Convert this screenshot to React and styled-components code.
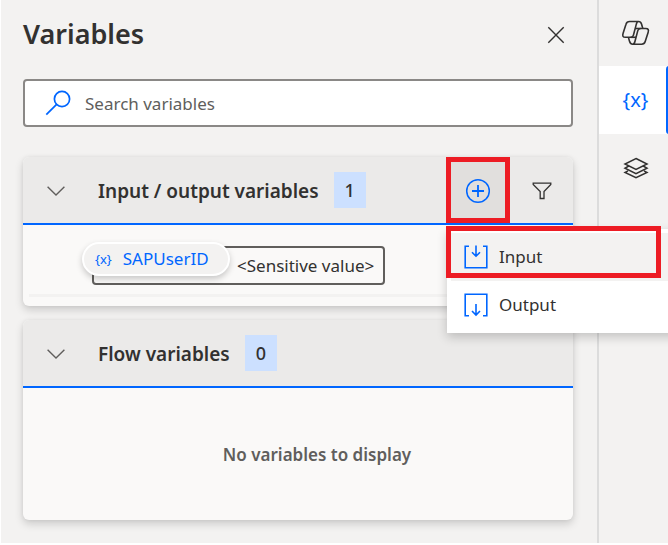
import React from "react";
import styled, { createGlobalStyle } from "styled-components";

const blue = "#0066ff";
const ink = "#323130";

const GlobalStyle = createGlobalStyle`
  *, *::before, *::after { box-sizing: border-box; }
  body { margin: 0; background: #fff; overflow: hidden; }
  body, button, input { font-family: "Noto Sans", "Open Sans", sans-serif; color: ${ink}; }
  h1, h2, p, ul { margin: 0; padding: 0; }
  button { border: 0; padding: 0; background: transparent; cursor: pointer; }
  svg { display: block; flex: none; }
`;

const Shell = styled.div`
  display: flex;
  height: 100vh;
  border-left: 1px solid #fff;
  border-bottom: 2px solid #fff;
  background: #f3f2f1;
  overflow: hidden;
`;

const Panel = styled.main`
  flex: 1;
  min-width: 0;
  padding: 12px 24px 24px 22px;
`;

const PanelHeader = styled.header`
  display: flex;
  align-items: center;
  justify-content: space-between;
  height: 44px;
`;

const Title = styled.h1`
  font-size: 27px;
  line-height: 44px;
  font-weight: 600;
`;

const CloseButton = styled.button`
  display: grid;
  place-items: center;
  width: 34px;
  height: 44px;
  padding-top: 2px;
`;

const SearchBox = styled.label`
  display: flex;
  align-items: center;
  gap: 14px;
  height: 48px;
  margin: 23px 0 30px;
  padding: 0 20px;
  border: 2px solid #8a8886;
  border-radius: 4px;
  background: #fff;
`;

const SearchInput = styled.input`
  flex: 1;
  min-width: 0;
  border: 0;
  outline: 0;
  padding: 2px 0 0;
  font-size: 17px;
  line-height: 24px;
  background: transparent;
  &::placeholder { color: #605e5c; opacity: 1; }
`;

const Card = styled.section`
  border-radius: 6px;
  background: #faf9f8;
  box-shadow: 0 4px 8px rgba(0, 0, 0, 0.16), 0 0 4px rgba(0, 0, 0, 0.06);
  & + & { margin-top: 14px; }
`;

const CardHeader = styled.div`
  display: flex;
  align-items: center;
  height: 68px;
  border-bottom: 2px solid ${blue};
  border-radius: 6px 6px 0 0;
  background: #ebeae9;
`;

const Toggle = styled.button`
  display: grid;
  place-items: center;
  width: 66px;
  height: 66px;
  margin-right: 9px;
  padding-top: 2px;
`;

const CardTitle = styled.h2`
  padding-top: 2px;
  font-size: 19px;
  line-height: 28px;
  font-weight: 600;
  white-space: nowrap;
`;

const Count = styled.span`
  min-width: 32px;
  margin-left: 15px;
  padding: 0 11px;
  background: #cce0ff;
  font-size: 18px;
  line-height: 36px;
  font-weight: 500;
  text-align: center;
`;

const Actions = styled.div`
  position: relative;
  display: flex;
  align-self: flex-start;
  margin-left: auto;
`;

const ActionButton = styled.button`
  position: relative;
  display: grid;
  place-items: center;
  width: 63px;
  height: 66px;
  padding-top: 2px;
  background: ${(p) => (p.$active ? "#e1dfdd" : "transparent")};
  &:first-child { width: 64px; }
`;

const Highlight = styled.span`
  position: absolute;
  inset: ${(p) => p.$inset || 0};
  border: 5px solid #ed1c24;
  pointer-events: none;
`;

const Menu = styled.ul`
  position: absolute;
  z-index: 2;
  top: 72px;
  left: 1px;
  width: 240px;
  padding: 4px;
  list-style: none;
  background: #fff;
  box-shadow: 0 4px 10px rgba(0, 0, 0, 0.2);
`;

const MenuButton = styled.button`
  display: flex;
  align-items: center;
  gap: 11px;
  width: 100%;
  height: 48px;
  padding-left: 13px;
  font-size: 17px;
  line-height: 24px;
  background: ${(p) => (p.$active ? "#f3f2f1" : "#fff")};
`;

const VariableRow = styled.div`
  margin: 0 6px;
  padding: 21px 0 9px 63px;
  border-bottom: 3px solid #f3f2f1;
`;

const VariableList = styled.div`
  padding-bottom: 9px;
`;

const ValueBox = styled.div`
  position: relative;
  width: fit-content;
  min-width: 293px;
  padding-left: 143px;
  border: 2px solid #605e5c;
  border-radius: 4px;
  font-size: 17px;
  line-height: 35px;
  white-space: nowrap;
`;

const Chip = styled.button`
  position: absolute;
  top: -6px;
  left: -12px;
  display: flex;
  align-items: center;
  gap: 11px;
  width: 148px;
  height: 34px;
  padding-left: 11px;
  border: 2px solid #fff;
  border-radius: 17px;
  background: #f3f2f1;
  box-shadow: 0 3px 6px rgba(0, 0, 0, 0.2);
  color: ${blue};
  font-size: 17px;
  line-height: 24px;
`;

const Braces = styled.span`
  font-size: ${(p) => p.$size}px;
  line-height: 24px;
  color: ${blue};
`;

const Empty = styled.p`
  padding: 55px 0 53px;
  margin-left: 38px;
  text-align: center;
  font-size: 17px;
  line-height: 24px;
  font-weight: 600;
  color: #605e5c;
`;

const Rail = styled.nav`
  flex: none;
  width: 71px;
  border-left: 2px solid #dcdcdc;
  overflow: hidden;
`;

const RailButton = styled.button`
  display: grid;
  place-items: center;
  width: 73px;
  height: ${(p) => p.$height}px;
  background: ${(p) => (p.$active ? "#fff" : "transparent")};
  position: relative;
  &::after {
    content: "";
    position: absolute;
    inset: 0 0 0 auto;
    width: 6px;
    border-radius: 3px;
    background: ${(p) => (p.$active ? blue : "transparent")};
  }
`;

const CopilotLobe = () => (
  <>
    <path d="M21.8 8.5 20.6 4.2C20 2.3 19 1.5 17.6 1.5H8.6C6.7 1.5 5.5 2.5 5 4.2L2.1 13.2C1.2 16 2 17.3 4.4 17.3H9.8C11.3 17.3 12 16.6 12.4 15.2L15.2 4.6C15.7 2.5 16.4 1.5 17.6 1.5" />
    <path d="M14.2 8.5H19.6" />
  </>
);

const CopilotIcon = () => (
  <svg width="29" height="26" viewBox="0 0 29 26" fill="none" stroke={ink} strokeWidth="1.6" strokeLinejoin="round">
    <CopilotLobe />
    <g transform="rotate(180 14.6 12.9)"><CopilotLobe /></g>
  </svg>
);

const LayersIcon = () => (
  <svg width="26" height="22" viewBox="0 0 26 22" fill="none" stroke={ink} strokeWidth="1.5">
    <path d="M13 1.5 24 7 13 12.4 2 7ZM5 9.5 2 11.2 13 16.6 24 11.2 21 9.5M5 13.9 2 15.5 13 20.7 24 15.5 21 13.9" />
  </svg>
);

const CloseIcon = () => (
  <svg width="18" height="18" viewBox="0 0 18 18" fill="none" stroke={ink} strokeWidth="1.4">
    <path d="M1.3 1.3 16.7 16.7M16.7 1.3 1.3 16.7" />
  </svg>
);

const SearchIcon = () => (
  <svg width="26" height="26" viewBox="0 0 26 26" fill="none" stroke={blue} strokeWidth="1.7">
    <circle cx="17" cy="9" r="7.6" />
    <path d="M11.6 14.4 1.3 24.7" />
  </svg>
);

const ChevronIcon = () => (
  <svg width="18" height="10" viewBox="0 0 18 10" fill="none" stroke="#605e5c" strokeWidth="1.4">
    <path d="M.6 .8 9 9 17.4 .8" />
  </svg>
);

const AddIcon = () => (
  <svg width="26" height="26" viewBox="0 0 26 26" fill="none" stroke={blue} strokeWidth="1.5">
    <circle cx="13" cy="13" r="11.3" />
    <path d="M13 7v12M7 13h12" strokeWidth="1.8" />
  </svg>
);

const FilterIcon = () => (
  <svg width="20" height="18" viewBox="0 0 20 18" fill="none" stroke={ink} strokeWidth="1.3">
    <path d="M1.2 1.2H18.8V2.4L12 9.5V16.5H8.2V9.5L1.2 2.4Z" />
  </svg>
);

const InputIcon = () => (
  <svg width="24" height="24" viewBox="0 0 24 24" fill="none" stroke={blue} strokeWidth="1.6">
    <path d="M5 1.2H1.2V22.8H22.8V1.2H19M12 .5V11M8 7.2 12 11.2 16 7.2" />
  </svg>
);

const OutputIcon = () => (
  <svg width="24" height="24" viewBox="0 0 24 24" fill="none" stroke={blue} strokeWidth="1.6">
    <path d="M5 22.8H1.2V1.2H22.8V22.8H19M12 11V22M8 18 12 22 16 18" />
  </svg>
);

function SectionHeader({ title, count, children }) {
  return (
    <CardHeader>
      <Toggle type="button" aria-label={title} aria-expanded="true"><ChevronIcon /></Toggle>
      <CardTitle>{title}</CardTitle>
      <Count>{count}</Count>
      {children}
    </CardHeader>
  );
}

export default function App() {
  return (
    <>
      <GlobalStyle />
      <Shell>
        <Panel>
          <PanelHeader>
            <Title>Variables</Title>
            <CloseButton type="button" aria-label="Close"><CloseIcon /></CloseButton>
          </PanelHeader>
          <SearchBox>
            <SearchIcon />
            <SearchInput type="text" placeholder="Search variables" aria-label="Search variables" />
          </SearchBox>
          <Card>
            <SectionHeader title="Input / output variables" count={1}>
              <Actions>
                <ActionButton type="button" $active aria-label="Add variable" aria-haspopup="menu" aria-expanded="true">
                  <AddIcon />
                  <Highlight />
                </ActionButton>
                <ActionButton type="button" aria-label="Filter"><FilterIcon /></ActionButton>
                <Menu role="menu">
                  <li role="none">
                    <MenuButton type="button" role="menuitem" $active><InputIcon />Input</MenuButton>
                  </li>
                  <li role="none">
                    <MenuButton type="button" role="menuitem"><OutputIcon />Output</MenuButton>
                  </li>
                  <Highlight as="li" role="none" $inset="-3px 26px 55px -1px" />
                </Menu>
              </Actions>
            </SectionHeader>
            <VariableList>
              <VariableRow>
                <ValueBox>
                  &lt;Sensitive value&gt;
                  <Chip type="button"><Braces $size={13}>{"{x}"}</Braces>SAPUserID</Chip>
                </ValueBox>
              </VariableRow>
            </VariableList>
          </Card>
          <Card>
            <SectionHeader title="Flow variables" count={0} />
            <Empty>No variables to display</Empty>
          </Card>
        </Panel>
        <Rail aria-label="Panes">
          <RailButton type="button" $height={66} aria-label="Copilot"><CopilotIcon /></RailButton>
          <RailButton type="button" $height={68} $active aria-label="Variables"><Braces $size={20}>{"{x}"}</Braces></RailButton>
          <RailButton type="button" $height={68} aria-label="UI elements"><LayersIcon /></RailButton>
        </Rail>
      </Shell>
    </>
  );
}
